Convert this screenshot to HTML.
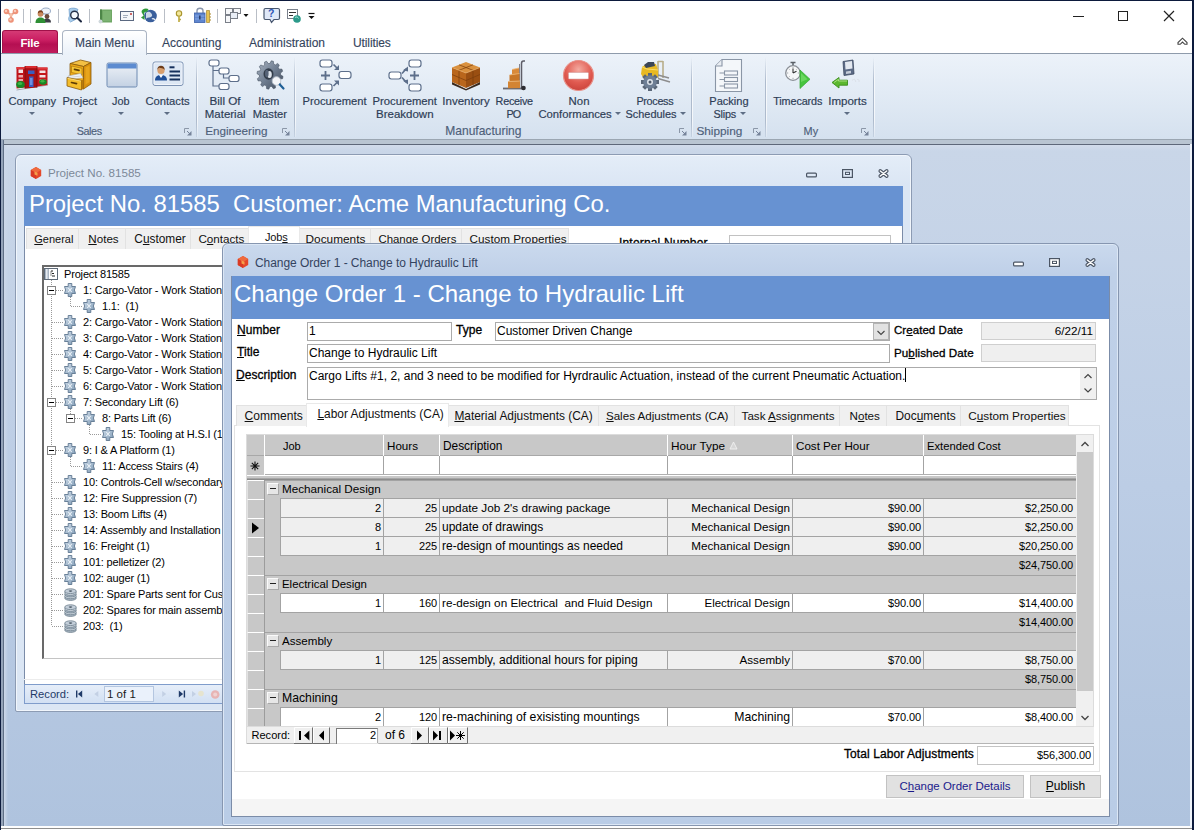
<!DOCTYPE html>
<html lang="en">
<head>
<meta charset="utf-8">
<title>Project No. 81585</title>
<style>
*{box-sizing:border-box;margin:0;padding:0}
html,body{width:1194px;height:830px;overflow:hidden;background:#fff}
body{position:relative;font-family:"Liberation Sans",sans-serif;font-size:12px;color:#000}
.a{position:absolute;white-space:nowrap}
u{text-decoration:underline;text-underline-offset:1px}
/* ---------- app frame ---------- */
#frameL{left:0;top:0;width:1px;height:830px;background:#0c1a3c}
#frameR{left:1192px;top:0;width:2px;height:830px;background:#0c1a3c}
#frameT{left:0;top:0;width:1194px;height:1px;background:#0c1a3c}
#qat{left:1px;top:1px;width:1191px;height:29px;background:#fff}
#tabrow{left:1px;top:30px;width:1191px;height:24px;background:#fff;border-bottom:1px solid #8e9bab}
#ribbon{left:1px;top:54px;width:1191px;height:85px;background:linear-gradient(#ecf2f9 0%,#e2ebf5 45%,#d5e1ef 100%)}
#ribline{left:1px;top:139px;width:1191px;height:1px;background:#9ba6b2}
#ribgap{left:1px;top:140px;width:1191px;height:4px;background:#bac5d2}
#mdiTop{left:1px;top:143.500px;width:1190px;height:1.500px;background:#5f687a}
#mdi{left:1px;top:145px;width:1191px;height:681px;background:linear-gradient(#d3dceb 0,#c9d6e8 6px,#bccde5 50%,#afc3de 100%)}
#mdiL{left:1px;top:140px;width:3px;height:686px;background:#94a3b9;border-right:1px solid #5f6f86}
#mdiL2{left:4px;top:145px;width:4px;height:681px;background:linear-gradient(90deg,#cdd8e9,rgba(205,216,233,0))}
#mdiR{left:1190px;top:144px;width:2px;height:684px;background:#eef3fa}
#status{left:1px;top:826px;width:1191px;height:4px;background:#fdfdfd;border-bottom:1px solid #fff}
#statusLine{left:1px;top:828px;width:1191px;height:1px;background:#8e8e8e}
.rl{color:#2e3d56;line-height:14px;-webkit-text-stroke:.18px #2e3d56}
.gl{color:#4e607a;line-height:14px;-webkit-text-stroke:.15px #4e607a}
.gsep2{width:1px;top:57px;height:80px;background:linear-gradient(rgba(255,255,255,0),rgba(255,255,255,.7) 30%,rgba(255,255,255,.7) 80%,rgba(255,255,255,.2))}
.gsep{width:1px;top:57px;height:80px;background:linear-gradient(rgba(160,175,195,0),#aebbcd 30%,#aebbcd 80%,rgba(160,175,195,.3))}
.rtab{font-size:12px;color:#34445c;top:36px;line-height:14px;-webkit-text-stroke:.12px #34445c}
.dd{width:0;height:0;border-left:3px solid transparent;border-right:3px solid transparent;border-top:3px solid #5e6e85}
/* ---------- child windows ---------- */
.win{border:1px solid #8c9bb3;border-radius:6px 6px 2px 2px;background:#dbe6f4;box-shadow:inset 0 0 0 1px #f1f6fc}
.hdr{background:#6792d2;color:#fff}
.tab{color:#111;top:0;line-height:16px;background:#f0f0f0;border:1px solid #e2e2e2;border-bottom:none;font-size:12px}
.tab.sel{background:#fff;border-color:#e9e9e9;z-index:2}

.fl{font-size:12px;line-height:15px;-webkit-text-stroke:.3px #000;letter-spacing:.05px}
.fb{font-size:12px;line-height:17px;padding:0 2px 0 1px;border:1px solid #ababab;background:#fff;overflow:hidden}
.fb.ro{background:#efefef;border-color:#cfcfcf;padding-right:3px}
.btn{font-size:12px;line-height:21px;text-align:center;background:#e1e1e1;border:1px solid #c2c2c2}

.gh{height:21px;line-height:22px}
.gt{line-height:16px}
.gc{line-height:18px;height:18px;padding:0 2px;overflow:hidden}
</style>
</head>
<body>
<div class="a" id="qat"></div>
<div class="a" id="tabrow"></div>
<div class="a" id="ribbon"></div>
<div class="a" id="ribline"></div>
<div class="a" id="ribgap"></div>
<div class="a" id="mdi"></div>
<div class="a" id="mdiTop"></div>
<div class="a" id="mdiL"></div>
<div class="a" id="status"></div>
<div class="a" id="frameT"></div>
<div class="a" id="frameL"></div>
<div class="a" id="frameR"></div>
<div class="a" id="mdiL2"></div>
<div class="a" id="mdiR"></div>
<div class="a" id="statusLine"></div>

<!--RIBBON--><!--RL-->
<div class="a rl" style="left:8.4px;top:94px;font-size:11.17px">Company</div>
<div class="a rl" style="left:62.4px;top:94px;font-size:11.12px">Project</div>
<div class="a rl" style="left:112.0px;top:94px;font-size:10.85px">Job</div>
<div class="a rl" style="left:145.4px;top:94px;font-size:11.23px">Contacts</div>
<div class="a rl" style="left:209.4px;top:94px;font-size:11.7px">Bill Of</div>
<div class="a rl" style="left:204.8px;top:107px;font-size:11.47px">Material</div>
<div class="a rl" style="left:258.3px;top:94px;font-size:10.85px">Item</div>
<div class="a rl" style="left:252.7px;top:107px;font-size:11.22px">Master</div>
<div class="a rl" style="left:302.6px;top:94px;font-size:11.2px">Procurement</div>
<div class="a rl" style="left:372.5px;top:94px;font-size:11.27px">Procurement</div>
<div class="a rl" style="left:376.0px;top:107px;font-size:11.51px">Breakdown</div>
<div class="a rl" style="left:442.3px;top:94px;font-size:11.52px">Inventory</div>
<div class="a rl" style="left:495.6px;top:94px;font-size:10.8px;letter-spacing:-0.26px">Receive</div>
<div class="a rl" style="left:506.5px;top:107px;font-size:10.8px;letter-spacing:-0.852px">PO</div>
<div class="a rl" style="left:568.6px;top:94px;font-size:11.39px">Non</div>
<div class="a rl" style="left:538.4px;top:107px;font-size:11.29px">Conformances</div>
<div class="a rl" style="left:636.4px;top:94px;font-size:10.8px;letter-spacing:-0.302px">Process</div>
<div class="a rl" style="left:625.5px;top:107px;font-size:10.94px">Schedules</div>
<div class="a rl" style="left:709.3px;top:94px;font-size:11.05px">Packing</div>
<div class="a rl" style="left:713.5px;top:107px;font-size:10.8px;letter-spacing:-0.182px">Slips</div>
<div class="a rl" style="left:773.2px;top:94px;font-size:10.8px;letter-spacing:-0.101px">Timecards</div>
<div class="a rl" style="left:828.2px;top:94px;font-size:11.55px">Imports</div>
<div class="a gl" style="left:76.7px;top:124px;font-size:10.8px;letter-spacing:-0.403px">Sales</div>
<div class="a gl" style="left:205.2px;top:124px;font-size:11.69px">Engineering</div>
<div class="a gl" style="left:445.3px;top:124px;font-size:12.02px">Manufacturing</div>
<div class="a gl" style="left:696.4px;top:124px;font-size:11.82px">Shipping</div>
<div class="a gl" style="left:803.6px;top:124px;font-size:10.88px">My</div>
<div class="a dd" style="left:28.5px;top:111.5px"></div>
<div class="a dd" style="left:76.5px;top:111.5px"></div>
<div class="a dd" style="left:118px;top:111.5px"></div>
<div class="a dd" style="left:164px;top:111.5px"></div>
<div class="a dd" style="left:614.5px;top:112px"></div>
<div class="a dd" style="left:680px;top:112px"></div>
<div class="a dd" style="left:740px;top:112px"></div>
<div class="a dd" style="left:844px;top:112px"></div>
<svg class="a" style="left:184px;top:127.500px" width="8" height="8" viewBox="0 0 8 8"><path d="M.5 5V.5H5" fill="none" stroke="#8b97a8"/><path d="M7.500 3v4.500H3z" fill="#76839a"/><path d="M3 3l3.500 3.500" stroke="#76839a"/></svg>
<svg class="a" style="left:281.5px;top:127.500px" width="8" height="8" viewBox="0 0 8 8"><path d="M.5 5V.5H5" fill="none" stroke="#8b97a8"/><path d="M7.500 3v4.500H3z" fill="#76839a"/><path d="M3 3l3.500 3.500" stroke="#76839a"/></svg>
<svg class="a" style="left:679px;top:127.500px" width="8" height="8" viewBox="0 0 8 8"><path d="M.5 5V.5H5" fill="none" stroke="#8b97a8"/><path d="M7.500 3v4.500H3z" fill="#76839a"/><path d="M3 3l3.500 3.500" stroke="#76839a"/></svg>
<svg class="a" style="left:753px;top:127.500px" width="8" height="8" viewBox="0 0 8 8"><path d="M.5 5V.5H5" fill="none" stroke="#8b97a8"/><path d="M7.500 3v4.500H3z" fill="#76839a"/><path d="M3 3l3.500 3.500" stroke="#76839a"/></svg>
<svg class="a" style="left:861px;top:127.500px" width="8" height="8" viewBox="0 0 8 8"><path d="M.5 5V.5H5" fill="none" stroke="#8b97a8"/><path d="M7.500 3v4.500H3z" fill="#76839a"/><path d="M3 3l3.500 3.500" stroke="#76839a"/></svg>
<!--/RL-->
<!-- ribbon tabs -->
<div class="a" style="left:2px;top:30px;width:56px;height:23px;border-radius:3px 3px 0 0;background:linear-gradient(#d53a75 0%,#cb1f63 40%,#b50f52 60%,#c01c5c 100%);border:1px solid #a01049;border-bottom:none"></div>
<div class="a" style="left:2px;top:36px;width:56px;text-align:center;font-size:11.5px;color:#fff;font-weight:bold;letter-spacing:-.2px;line-height:14px">File</div>
<div class="a" style="left:62px;top:30px;width:85px;height:25px;border:1px solid #aab4c3;border-bottom:none;border-radius:4px 4px 0 0;background:linear-gradient(#fff,#eaf1f9)"></div>
<div class="a rtab" style="left:75px">Main Menu</div>
<div class="a rtab" style="left:162px">Accounting</div>
<div class="a rtab" style="left:249px">Administration</div>
<div class="a rtab" style="left:353px;letter-spacing:-.1px">Utilities</div>
<!-- window buttons -->
<svg class="a" style="left:1060px;top:0" width="134" height="54" viewBox="0 0 134 54" fill="none" stroke="#222" stroke-width="1">
<path d="M13 16.500h11"/><rect x="58.5" y="11.5" width="9" height="9"/><path d="M104 11l10 10M114 11l-10 10" stroke-width="1.2"/>
<path d="M118 44.300v-1.800l4.500-4.300 4.500 4.300v1.800h-2.200l-2.300-2.300-2.300 2.300z" stroke="#444" stroke-width="1.100" fill="#fff"/>
</svg>
<!-- group separators -->
<div class="a gsep" style="left:196px"></div><div class="a gsep2" style="left:197px"></div><div class="a gsep" style="left:294px"></div><div class="a gsep2" style="left:295px"></div><div class="a gsep" style="left:691px"></div><div class="a gsep2" style="left:692px"></div><div class="a gsep" style="left:765px"></div><div class="a gsep2" style="left:766px"></div><div class="a gsep" style="left:873px"></div><div class="a gsep2" style="left:874px"></div>

<!-- Company -->
<svg class="a" style="left:15px;top:64px" width="34" height="27" viewBox="0 0 34 27">
<path d="M1 22.500l32-4v2.500L1.500 26z" fill="#f4f5f6"/><path d="M1.500 26l31.500-5" stroke="#8e969e" stroke-width=".8"/>
<path d="M1.500 3h8.500v20.500l-8.500 1z" fill="#c0151a"/><path d="M1.500 3h8.500v2h-8.500z" fill="#e0383c"/>
<path d="M22 3.500h10.500v17.500L22 22.500z" fill="#c4181c"/><path d="M22 3.500h10.500v2H22z" fill="#e0383c"/>
<path d="M10 2h12v21.500L10 24.500z" fill="#a80f14"/><path d="M10 2h12v2.200H10z" fill="#d92c30"/><path d="M10 2v22.500" stroke="#7c0a0e" stroke-width=".8"/><path d="M22 2v21.500" stroke="#7c0a0e" stroke-width=".8"/>
<g fill="#f3e4e5"><rect x="3.500" y="5.500" width="4.500" height="3.500"/><rect x="24.500" y="6.500" width="6" height="2.500"/><rect x="24.500" y="11" width="6" height="2.500"/></g>
<g fill="#e9a5a7"><rect x="3.500" y="11" width="4.500" height="2.500"/><rect x="3.500" y="15" width="4.500" height="2"/><rect x="24.500" y="15.500" width="6" height="2"/></g>
<g fill="#3a5cc0"><rect x="13" y="6.500" width="6.500" height="3.500"/><rect x="14" y="12.500" width="4.500" height="10.500"/></g><rect x="15" y="14" width="2.500" height="7" fill="#6f8fe0"/>
<ellipse cx="5.500" cy="20.500" rx="4.300" ry="3.600" fill="#178a27"/><ellipse cx="28" cy="18" rx="3.800" ry="2.800" fill="#178a27"/><ellipse cx="5" cy="19.500" rx="2.200" ry="1.500" fill="#3fb444"/><ellipse cx="27.500" cy="17.300" rx="2" ry="1.200" fill="#3fb444"/>
</svg>
<!-- Project -->
<svg class="a" style="left:65px;top:58px" width="28" height="33" viewBox="0 0 28 33" stroke-linejoin="round">
<path d="M5 5.500L15.500 2l10.500 2.500L18.500 8.500z" fill="#f3c044" stroke="#8a5a0a" stroke-width=".8"/>
<path d="M18.500 8.500L26 4.500V26l-7.500 5z" fill="#d8900d" stroke="#8a5a0a" stroke-width=".8"/><path d="M20.500 9.500l4-2v16.500l-4 2.800z" fill="#e8a51c"/>
<path d="M5 5.500l13.500 3V31L5 27z" fill="#eeaa18" stroke="#8a5a0a" stroke-width=".8"/>
<path d="M6.500 8l10.500 2.300v6.500L6.500 14.500z" fill="#f6c534" stroke="#a36a08" stroke-width=".6"/>
<path d="M9.500 11.300l4.500 1" stroke="#5e3c05" stroke-width="1.700" stroke-linecap="round"/>
<path d="M3 18l12.500-2.500 2.500 4.500-14 1z" fill="#f2f4f6" stroke="#9aa0a8" stroke-width=".5"/><path d="M4 19.500l12-1.500" stroke="#c5cad0" stroke-width=".7"/>
<path d="M2 19.500l14.500 3v9.500L2 28z" fill="#f4bd2a" stroke="#8a5a0a" stroke-width=".8"/><path d="M16.500 22.500l2-1.500v9.500l-2 1.500z" fill="#b97a0a"/>
<path d="M6.500 24.500l5 1.100" stroke="#5e3c05" stroke-width="1.700" stroke-linecap="round"/>
<path d="M2.500 20.300l13.500 2.800" stroke="#fbdf86" stroke-width=".8"/>
</svg>
<!-- Job -->
<svg class="a" style="left:106px;top:62px" width="32" height="26" viewBox="0 0 32 26">
<defs><linearGradient id="jb" x1="0" y1="0" x2="0" y2="1"><stop offset="0" stop-color="#eef2f7"/><stop offset="1" stop-color="#c3d1e3"/></linearGradient></defs>
<rect x="1" y="1" width="30" height="24" rx="1.500" fill="url(#jb)" stroke="#6f8bb2" stroke-width="1"/>
<path d="M1.500 2.500a1 1 0 0 1 1-1h27a1 1 0 0 1 1 1V6.500h-29z" fill="#5c8bd0"/>
</svg>
<!-- Contacts -->
<svg class="a" style="left:152px;top:61px" width="32" height="26" viewBox="0 0 32 26">
<rect x="1" y="1" width="30" height="23.500" rx="2" fill="#dde7f4" stroke="#7d93b4" stroke-width="1"/>
<rect x="2" y="2" width="28" height="21.500" rx="1.500" fill="none" stroke="#f5f8fc" stroke-width=".8"/>
<path d="M3 19.500c0-4 2.500-5.500 6-5.500s6 1.500 6 5.500z" fill="#1f4f98"/><path d="M7 14l2 3 2-3z" fill="#fff"/>
<circle cx="9" cy="9.500" r="3.600" fill="#d79e6d"/><path d="M5.300 9c0-3 1.600-4.300 3.700-4.300s3.700 1.300 3.700 4.300c-1.300-2-4-1.600-5.400-2.200-.7.400-1.500 1-2 2.200z" fill="#6b3a17"/>
<g fill="#16305c"><rect x="17.500" y="5.300" width="5" height="2"/><rect x="17.500" y="9.500" width="10.500" height="2"/><rect x="17.500" y="13.500" width="10.500" height="2"/><rect x="17.500" y="17.500" width="10.500" height="2"/></g>
</svg>

<!-- BOM -->
<svg class="a" style="left:208px;top:59px" width="33" height="33" viewBox="0 0 33 33" fill="#fff" stroke="#5d6f8b" stroke-width="1.200">
<path d="M5 7v20h6M5 11.500h6M15.500 15v4h6" fill="none"/>
<rect x="1" y="1" width="10" height="6" rx="2.200"/><rect x="11" y="9" width="10" height="6" rx="2.200"/><rect x="21" y="16.500" width="10" height="6" rx="2.200"/><rect x="11" y="24.500" width="10" height="6" rx="2.200"/>
</svg>
<!-- Item master gear -->
<svg class="a" style="left:256px;top:59px" width="30" height="33" viewBox="0 0 30 33">
<defs><linearGradient id="gg" x1="0" y1="0" x2="1" y2="1"><stop offset="0" stop-color="#a9b4c2"/><stop offset=".5" stop-color="#6f7d90"/><stop offset="1" stop-color="#3f4a5a"/></linearGradient></defs>
<path d="M24.67 16.00L27.01 17.34L26.62 19.68L24.00 20.04L23.24 21.80L24.65 24.23L23.24 26.04L20.80 24.94L19.34 26.05L19.44 28.91L17.38 29.72L15.78 27.44L14.00 27.60L12.77 30.14L10.62 29.72L10.28 26.87L8.66 26.05L6.43 27.57L4.76 26.04L5.78 23.39L4.76 21.80L2.12 21.91L1.38 19.68L3.48 17.93L3.33 16.00L0.99 14.66L1.38 12.32L4.00 11.96L4.76 10.20L3.35 7.77L4.76 5.96L7.20 7.06L8.66 5.95L8.56 3.09L10.62 2.28L12.22 4.56L14.00 4.40L15.23 1.86L17.38 2.28L17.72 5.13L19.34 5.95L21.57 4.43L23.24 5.96L22.22 8.61L23.24 10.20L25.88 10.09L26.62 12.32L24.52 14.07z" fill="url(#gg)" stroke="#4a5565" stroke-width=".6"/>
<ellipse cx="12.500" cy="15" rx="5" ry="5.800" fill="#333d4b"/><ellipse cx="13.500" cy="15.500" rx="2.300" ry="3.500" fill="#dfe5ec"/><ellipse cx="10.800" cy="14.500" rx="1.800" ry="3.800" fill="#566377"/>
<circle cx="20.500" cy="22" r="4.300" fill="#f3f5f8" stroke="#b9c2cd" stroke-width=".9"/><path d="M23.800 25.500l3.700 4" stroke="#1f5f96" stroke-width="2.200" stroke-linecap="round"/>
</svg>
<!-- Procurement -->
<svg class="a" style="left:319px;top:59px" width="34" height="34" viewBox="0 0 34 34" fill="#fff" stroke="#5d6f8b" stroke-width="1.200">
<rect x="1" y="1" width="12" height="7" rx="2.400"/><rect x="1" y="25" width="12" height="7" rx="2.400"/><rect x="20" y="12.500" width="12" height="7" rx="2.400"/>
<path d="M14.500 5.500l4 4M14.500 27l4-4" fill="none" stroke-width="1.700"/><path d="M20 6v5h-5zM20 26.500v-5h-5z" fill="#5d6f8b" stroke="none"/>
<path d="M2 16.500h9M6.500 12v9" stroke-width="1.800" fill="none"/>
</svg>
<!-- Procurement breakdown -->
<svg class="a" style="left:388px;top:59px" width="34" height="34" viewBox="0 0 34 34" fill="#fff" stroke="#5d6f8b" stroke-width="1.200">
<rect x="21" y="1" width="12" height="7" rx="2.400"/><rect x="21" y="25" width="12" height="7" rx="2.400"/><rect x="1" y="13" width="12" height="7" rx="2.400"/>
<path d="M14 14.500l4-4.500M14 18.500l4 4.500" fill="none" stroke-width="1.700"/><path d="M20 7.500v5l-5-1.200zM20 25.500v-5l-5 1.200z" fill="#5d6f8b" stroke="none"/>
<path d="M22 16.500h9M26.500 12v9" stroke-width="1.800" fill="none"/>
</svg>
<!-- Inventory -->
<svg class="a" style="left:450px;top:61px" width="32" height="30" viewBox="0 0 32 30">
<path d="M2 21l14 7 14-7v2.500l-14 6-14-6z" fill="#3a2a1e"/>
<path d="M2 6.500L16 1l14 5.500L16 12z" fill="#d9913f"/><path d="M2 6.500l14 5.500v15L2 21z" fill="#b9661c"/><path d="M30 6.500L16 12v15l14-6z" fill="#9a4f12"/>
<path d="M9 3.800l14 5.500M23 3.800L9 9.300M2 13.500l14 6 14-6M9 9.300v15M23 9.300v15" stroke="#7a3c0c" stroke-width=".7" fill="none"/>
<path d="M2 6.500L16 12l14-5.500" stroke="#e9ad66" stroke-width=".7" fill="none"/>
</svg>
<!-- Receive PO -->
<svg class="a" style="left:500px;top:58px" width="30" height="34" viewBox="0 0 30 34">
<path d="M21.500 30V5.500c0-2 .5-2.500 2-2.500h1.500" fill="none" stroke="#5e5e68" stroke-width="1.500"/><path d="M19.500 30V6" stroke="#85858f" stroke-width="1"/>
<path d="M3 30.500h20" stroke="#6a6a72" stroke-width="1.800"/>
<path d="M12 11.500l7-1.500v6l-7 1z" fill="#d98a3a"/><path d="M9.500 17l10-1.500v7.500l-10 .5z" fill="#c87728"/><path d="M8 23.500l12-.5v7l-12 .3z" fill="#d38433"/>
<path d="M12 11.500l7-1.500M9.500 17l10-1.500M8 23.500l12-.5" stroke="#efb776" stroke-width=".8"/>
<circle cx="23.500" cy="30" r="2.300" fill="#2d2d33"/>
</svg>
<!-- Non conformances -->
<svg class="a" style="left:562px;top:59px" width="33" height="33" viewBox="0 0 33 33">
<defs><radialGradient id="nc" cx=".5" cy=".3" r=".8"><stop offset="0" stop-color="#f4aaa0"/><stop offset=".55" stop-color="#e05a50"/><stop offset="1" stop-color="#c43c35"/></radialGradient></defs>
<circle cx="16.500" cy="16.500" r="15" fill="url(#nc)" stroke="#e89088" stroke-width="1.200"/>
<rect x="6.500" y="13.500" width="20" height="6.500" rx=".8" fill="#fff" stroke="#c99" stroke-width=".5"/>
</svg>
<!-- Process schedules -->
<svg class="a" style="left:638px;top:59px" width="34" height="33" viewBox="0 0 34 33">
<path d="M20 2v17M25 2v17M20 2.500h5" stroke="#b8ae8a" stroke-width="1.600" fill="none"/>
<path d="M20 19.500l12 3.500M20 16l11 3" stroke="#8d8d8d" stroke-width="1.400"/>
<path d="M4 8l6-4 8 1 2 6v7l-14 2-3-5z" fill="#e8b923"/><path d="M6 6l4-3h6l1 4-9 2z" fill="#3b4656"/><path d="M4 8l5 2 11 1" stroke="#f8dc6a" stroke-width="1" fill="none"/>
<g transform="translate(12 23)"><g fill="#5a6778"><rect x="-2" y="-9" width="4" height="18"/><rect x="-2" y="-9" width="4" height="18" transform="rotate(45)"/><rect x="-2" y="-9" width="4" height="18" transform="rotate(90)"/><rect x="-2" y="-9" width="4" height="18" transform="rotate(135)"/></g><circle r="6.800" fill="#6e7f95"/><circle r="3" fill="#dfe5ec"/><circle r="1.500" fill="#4b5868"/></g>
</svg>
<!-- Packing slips -->
<svg class="a" style="left:714px;top:58px" width="29" height="35" viewBox="0 0 29 35" fill="#f4f7fa" stroke="#8a96a6" stroke-width="1.100">
<path d="M8 1.500h19.500v32h-26V8z"/><path d="M8 1.500V8H1.500" fill="#e9edf2"/>
<rect x="10.500" y="13" width="13" height="4"/><rect x="10.500" y="19.500" width="13" height="4"/><rect x="10.500" y="26" width="13" height="4"/><path d="M5.500 15h5M5.500 21.500h5M5.500 28h5" fill="none"/>
</svg>
<!-- Timecards -->
<svg class="a" style="left:782px;top:59px" width="32" height="33" viewBox="0 0 32 33">
<path d="M8.500 3.500h5M11 3.500v3" stroke="#5a5f66" stroke-width="1.500"/><circle cx="11" cy="14" r="7.300" fill="#f6f7f8" stroke="#8a8f96" stroke-width="1.300"/>
<g stroke="#8e949b" stroke-width=".8"><path d="M11 8v1.200M11 18.800V20M5 14h1.200M15.800 14H17M6.800 9.800l.8.800M14.400 10.600l.8-.8M6.800 18.200l.8-.8"/></g>
<path d="M11 14V9.500M11 14l3.500-1.800" stroke="#333" stroke-width="1.100" fill="none"/>
<path d="M18 11l10 9.300L18 29.500z" fill="#46c53e" stroke="#35a832" stroke-width=".7"/><path d="M19 14l6.500 6.200L19 23z" fill="#86e578" opacity=".55"/>
</svg>
<!-- Imports -->
<svg class="a" style="left:829px;top:59px" width="34" height="33" viewBox="0 0 34 33">
<path d="M14 2.500l10-1.500 1 14-10 1.500z" fill="#5b6a85" stroke="#3e4a61" stroke-width=".8"/><path d="M16 3l7-1 .5 7.500-7 1z" fill="#e4e9f0"/><path d="M17 12.500l5-.7v2.500l-5 .7z" fill="#c5ccd8"/>
<path d="M3 23.500l7-5v2.700h8.500v5H10v2.800z" fill="#5cb82f" stroke="#3b8d1c" stroke-width=".9"/><path d="M5 23.500l4.500-3.200v1.700h8.500" stroke="#a8e07f" stroke-width="1" fill="none"/>
<path d="M23 21.500c2-2 4-1 3.500 1.500M28 20.500c1.500-.5 2.500.5 2 2.500" stroke="#dce1e9" stroke-width="1" fill="none"/>
</svg>

<svg class="a" style="left:0;top:0" width="330" height="30" viewBox="0 0 330 30">
<!-- app icon -->
<g stroke="#e39a84" stroke-width="1.800" fill="none"><path d="M7 12l4 3 4-3M11 15v5"/></g>
<g fill="#ee9279"><circle cx="6.500" cy="11.500" r="2.800"/><circle cx="15.500" cy="11.500" r="2.800"/><circle cx="11" cy="20" r="2.800"/><circle cx="11" cy="15" r="1.800" fill="#f6c0a8"/></g>
<g fill="#f8cdbd"><circle cx="6" cy="11" r="1.200"/><circle cx="15" cy="11" r="1.200"/><circle cx="10.500" cy="19.500" r="1.200"/></g>
<!-- separators -->
<g stroke="#b9bec6" stroke-width="1"><path d="M23.500 9v14M30.500 9v14M58.500 9v14M89.500 9v14M164.500 9v14M217.500 9v14M256.500 9v14"/></g>
<!-- people -->
<ellipse cx="46" cy="11" rx="4.500" ry="3" fill="#eef2f7" stroke="#8fa3c0" stroke-width=".9"/><path d="M43 13.500l-1 2 2.500-1.500z" fill="#eef2f7" stroke="#8fa3c0" stroke-width=".6"/>
<circle cx="47" cy="16.500" r="2.400" fill="#6a4a3a"/><path d="M43 22.500c0-3 1.800-4 4-4s4 1 4 4z" fill="#3c3c46"/>
<circle cx="40.500" cy="14" r="2.800" fill="#c98a5e"/><path d="M37.800 13.500c0-2.500 1.200-3.300 2.700-3.300s2.700.8 2.700 3.300c-1-1.300-3.500-1.800-5.400 0z" fill="#7a3c18"/><path d="M35.500 23c0-4 2.300-5.500 5-5.500s5 1.500 5 5.500z" fill="#2f8f35"/>
<!-- find -->
<path d="M69 9c3-1.500 7-1 9 .5l-1.500 3c2 2 1 6-1 7l-5 2.500c-2-1-2.500-4-1-6z" fill="#a9cdec" stroke="#6f9cc8" stroke-width=".7"/>
<circle cx="74.500" cy="15" r="3.800" fill="#f4f8fc" stroke="#26324a" stroke-width="1.400"/><path d="M77.300 17.800l3.700 3.700" stroke="#1c2740" stroke-width="2" stroke-linecap="round"/>
<!-- book -->
<path d="M100 9.500h12v13h-12z" fill="#6fa765"/><path d="M100 9.500h2v13h-2z" fill="#4d8648"/><path d="M103 11h8v10h-8z" fill="#86ba7b" opacity=".6"/><circle cx="100.500" cy="21.500" r="2" fill="#cfd8dc"/>
<!-- envelope -->
<rect x="120.500" y="11.500" width="13" height="9" fill="#f4f6f9" stroke="#5a6880" stroke-width="1"/><path d="M123 15.500h5M123 17.500h4" stroke="#8d99ab" stroke-width=".8"/><rect x="130" y="13" width="2" height="2" fill="#c66"/>
<!-- globe -->
<circle cx="150.500" cy="16" r="6.300" fill="#3a5f9c"/><path d="M146 13c2-2 4-1 5 0s2 3 0 4-4 0-5 2" fill="#e8eef5" opacity=".85"/><path d="M152 19c1-1 3 0 3 1.500" stroke="#e8eef5" stroke-width="1.300" fill="none"/>
<path d="M141.500 12c0-3 4-4.500 7-3l-1.500 3c-2-.5-3 .5-3 2.500v2z" fill="#2f9a3a"/><path d="M141 17.500l3.500-2.500v5z" fill="#2f9a3a"/>
<!-- key -->
<circle cx="179" cy="13.500" r="2.700" fill="#f3e79a" stroke="#a8942c" stroke-width="1.100"/><path d="M179 16v6M179 19.500h1.800" stroke="#a8942c" stroke-width="1.600"/><path d="M179 16v6" stroke="#f0e17c" stroke-width=".6"/>
<!-- lock+key -->
<path d="M197 13v-2.200c0-3.500 6-3.500 6 0V13" fill="none" stroke="#8b97ad" stroke-width="1.400"/><rect x="194.500" y="13" width="10.500" height="9.500" fill="#5f86cf" stroke="#3b5fa8" stroke-width=".8"/><path d="M195 16h9.500M195 19h9.500" stroke="#8fb0e8" stroke-width=".8"/><rect x="199.200" y="15.500" width="1.300" height="4" fill="#1d2f58"/>
<path d="M206.500 10.500h3v12h-3z" fill="#e6c352" stroke="#a8862a" stroke-width=".7"/><path d="M209.500 14h1.500M209.500 17h1.500M209.500 20h1.500" stroke="#a8862a" stroke-width="1.200"/>
<!-- windows -->
<g fill="#f6f7f9" stroke="#7a7f88" stroke-width="1"><rect x="225.500" y="8.500" width="7" height="6"/><rect x="233.500" y="8.500" width="7" height="5"/><rect x="225.500" y="15.500" width="5" height="7"/><rect x="230.500" y="12.500" width="7" height="6" fill="#e9eef6"/></g>
<path d="M243.500 14h5l-2.500 3z" fill="#111"/>
<!-- help -->
<path d="M265.500 8.500h12.500a1.500 1.500 0 0 1 1.500 1.500v8a1.500 1.500 0 0 1-1.500 1.500h-4l-2.500 3-1.500-3H265.500A1.500 1.500 0 0 1 264 18v-8a1.500 1.500 0 0 1 1.500-1.500z" fill="#dfe8f8" stroke="#47566e" stroke-width="1.200"/>
<!-- list+globe -->
<rect x="287.500" y="9.500" width="10" height="9" fill="#fff" stroke="#6d7480" stroke-width=".9"/><path d="M289 12.500h7M289 15.500h4" stroke="#333" stroke-width="1"/><circle cx="297" cy="19" r="3.800" fill="#2c9a8a"/><path d="M295 17.500c1.500-1 3-.5 3.500 1" stroke="#9fe3d4" stroke-width="1" fill="none"/>
<!-- customize -->
<path d="M308.500 13.500h6" stroke="#111" stroke-width="1.200"/><path d="M308.500 16h6l-3 3z" fill="#111"/>
</svg>
<div class="a" style="left:268px;top:7px;font-size:10.500px;font-weight:bold;color:#2f55b5;line-height:13px">?</div>


<!--PROJECTWIN-->
<div class="a win" id="pw" style="left:15px;top:154px;width:897px;height:558px;background:linear-gradient(#e4edf8,#dbe6f4 30px)"></div>
<svg class="a" style="left:29px;top:166px" width="14" height="14" viewBox="0 0 14 14"><path d="M7 1l5.2 3v6L7 13 1.8 10V4z" fill="#e4472a"/><path d="M7 1l5.2 3L7 7 1.8 4z" fill="#ef6a3d"/><path d="M7 7v6L1.8 10V4z" fill="#d93a25"/><path d="M5.5 5.5l3 1.2v3l-3-1.2z" fill="#f6a04a"/></svg>
<div class="a" style="left:48px;top:166px;font-size:11.6px;color:#7c8898;line-height:14px">Project No. 81585</div>
<svg class="a" style="left:800px;top:164px" width="96" height="18" viewBox="0 0 96 18" fill="none" stroke="#4b5564" stroke-width="1.2">
<rect x="6.6" y="9.1" width="9.8" height="3.8" rx="1"/><rect x="42.6" y="5.6" width="9.8" height="7.8"/><rect x="45.5" y="8.3" width="4" height="2.2" stroke-width="1"/>
<path d="M80.300 7l6.400 5M86.700 7l-6.400 5" stroke-width="3.700" stroke-linecap="round"/><path d="M80.300 7l6.400 5M86.700 7l-6.400 5" stroke="#fff" stroke-width="1.500" stroke-linecap="round"/></svg>
<div class="a" style="left:24px;top:186px;width:879px;height:518px;background:#fff;border-left:1px solid #7b8ca8;border-right:1px solid #7b8ca8"></div>
<div class="a hdr" style="left:24px;top:186px;width:879px;height:40px"></div>
<div class="a" style="left:29px;top:190px;font-size:23.9px;line-height:28px;color:#fff;letter-spacing:-.03px">Project No. 81585&nbsp; Customer: Acme Manufacturing Co.</div>
<!-- tabs -->
<div class="a" style="left:26px;top:228px;width:560px;height:21px;z-index:0">
<div class="a tab" style="left:0px;width:53px;height:21px"><span class="a" style="left:7.3px;top:1.5px;font-size:11.0px;letter-spacing:-0.019px"><u>G</u>eneral</span></div>
<div class="a tab" style="left:52px;width:48px;height:21px"><span class="a" style="left:9.3px;top:1.5px;font-size:11.64px"><u>N</u>otes</span></div>
<div class="a tab" style="left:99px;width:66px;height:21px"><span class="a" style="left:8.3px;top:1.5px;font-size:11.88px">C<u>u</u>stomer</span></div>
<div class="a tab" style="left:164px;width:59px;height:21px"><span class="a" style="left:7.4px;top:1.5px;font-size:11.66px">C<u>o</u>ntacts</span></div>
<div class="a tab sel" style="left:222px;width:52px;top:-2px;height:24px"><span class="a" style="left:16.0px;top:1.5px;font-size:11.0px;letter-spacing:-0.159px">Job<u>s</u></span></div>
<div class="a tab" style="left:273px;width:72px;height:21px"><span class="a" style="left:5.6px;top:1.5px;font-size:11.82px">Documents</span></div>
<div class="a tab" style="left:344px;width:92px;height:21px"><span class="a" style="left:7.4px;top:1.5px;font-size:11.41px">Change Orders</span></div>
<div class="a tab" style="left:435px;width:108px;height:21px"><span class="a" style="left:7.6px;top:1.5px;font-size:11.71px">Custom Properties</span></div>
</div>
<div class="a fl" style="left:619px;top:236px;letter-spacing:.18px">Internal Number</div>
<div class="a" style="left:729px;top:235px;width:162px;height:20px;border:1px solid #c2c2c2;background:#fff"></div>
<!-- tree box -->
<div class="a" style="left:42px;top:265px;width:400px;height:394px;background:#fff;border-top:2px solid #696969;border-left:2px solid #696969;border-bottom:1px solid #c4c4c4"></div>
<!--TREE--><svg width="0" height="0" style="position:absolute"><defs>
<linearGradient id="jg" x1="0" y1="0" x2="1" y2="1"><stop offset="0" stop-color="#d3e0ec"/><stop offset="1" stop-color="#7d99b4"/></linearGradient>
<symbol id="job" viewBox="0 0 12 14"><path d="M4.200 .5h3.600v3h3.700l-1.100 3.500 1.100 3.500H7.800v3H4.200v-3H.5l1.100-3.500L.5 3.500h3.700z" fill="url(#jg)" stroke="#5d7690" stroke-width=".9"/><path d="M4.300 5l3.400 4M7.700 5L4.300 9" stroke="#eef3f8" stroke-width="1.100"/></symbol>
<symbol id="stk" viewBox="0 0 13 13"><g stroke="#6c7d8c" stroke-width=".8"><ellipse cx="6.500" cy="10" rx="5.800" ry="2.400" fill="#a9b7c4"/><ellipse cx="6.500" cy="8.300" rx="5.800" ry="2.400" fill="#d5dee6"/><ellipse cx="6.500" cy="6.600" rx="5.800" ry="2.400" fill="#a9b7c4"/><ellipse cx="6.500" cy="4.900" rx="5.800" ry="2.400" fill="#d5dee6"/><ellipse cx="6.500" cy="3.200" rx="5.800" ry="2.400" fill="#c3ced9"/></g><ellipse cx="6.500" cy="3.100" rx="1.800" ry=".8" fill="#55636f"/></symbol>
<symbol id="root" viewBox="0 0 14 12"><rect x=".5" y=".5" width="13" height="11" fill="#fff" stroke="#5e6a78"/><rect x="1" y="1" width="4" height="10" fill="#aab6c4"/><rect x="2" y="1" width="1.500" height="10" fill="#e6ebf1"/><path d="M7 3h2M8 5.500h2M8 8h3" stroke="#222" stroke-width="1"/><path d="M7 3v5" stroke="#555" stroke-width=".7"/></symbol>
</defs></svg>
<div class="a" style="left:44px;top:267px;width:398px;height:390px;overflow:hidden;font-size:11px;letter-spacing:-.17px">
<div class="a" style="left:7px;top:13px;width:1px;height:346px;background-image:linear-gradient(#9a9a9a 50%,transparent 50%);background-size:1px 2px"></div>
<div class="a" style="left:26px;top:30px;width:1px;height:9px;background-image:linear-gradient(#9a9a9a 50%,transparent 50%);background-size:1px 2px"></div>
<div class="a" style="left:26px;top:142px;width:1px;height:5px;background-image:linear-gradient(#9a9a9a 50%,transparent 50%);background-size:1px 2px"></div>
<div class="a" style="left:45px;top:158px;width:1px;height:9px;background-image:linear-gradient(#9a9a9a 50%,transparent 50%);background-size:1px 2px"></div>
<div class="a" style="left:26px;top:190px;width:1px;height:9px;background-image:linear-gradient(#9a9a9a 50%,transparent 50%);background-size:1px 2px"></div>
<svg class="a" style="left:0px;top:1px" width="14" height="12"><use href="#root"/></svg>
<div class="a" style="left:20px;top:0px;line-height:14px">Project 81585</div>
<div class="a" style="left:8px;top:23px;width:12px;height:1px;background-image:linear-gradient(90deg,#9a9a9a 50%,transparent 50%);background-size:2px 1px"></div>
<div class="a" style="left:3px;top:19px;width:9px;height:9px;background:#fff;border:1px solid #848484"></div><div class="a" style="left:5px;top:23px;width:5px;height:1px;background:#000"></div>
<svg class="a" style="left:20px;top:16px" width="12" height="14"><use href="#job"/></svg>
<div class="a" style="left:39px;top:16px;line-height:14px">1: Cargo-Vator - Work Station</div>
<div class="a" style="left:27px;top:39px;width:12px;height:1px;background-image:linear-gradient(90deg,#9a9a9a 50%,transparent 50%);background-size:2px 1px"></div>
<svg class="a" style="left:39px;top:32px" width="12" height="14"><use href="#job"/></svg>
<div class="a" style="left:58px;top:32px;line-height:14px">1.1:&nbsp; (1)</div>
<div class="a" style="left:8px;top:55px;width:12px;height:1px;background-image:linear-gradient(90deg,#9a9a9a 50%,transparent 50%);background-size:2px 1px"></div>
<svg class="a" style="left:20px;top:48px" width="12" height="14"><use href="#job"/></svg>
<div class="a" style="left:39px;top:48px;line-height:14px">2: Cargo-Vator - Work Station</div>
<div class="a" style="left:8px;top:71px;width:12px;height:1px;background-image:linear-gradient(90deg,#9a9a9a 50%,transparent 50%);background-size:2px 1px"></div>
<svg class="a" style="left:20px;top:64px" width="12" height="14"><use href="#job"/></svg>
<div class="a" style="left:39px;top:64px;line-height:14px">3: Cargo-Vator - Work Station</div>
<div class="a" style="left:8px;top:87px;width:12px;height:1px;background-image:linear-gradient(90deg,#9a9a9a 50%,transparent 50%);background-size:2px 1px"></div>
<svg class="a" style="left:20px;top:80px" width="12" height="14"><use href="#job"/></svg>
<div class="a" style="left:39px;top:80px;line-height:14px">4: Cargo-Vator - Work Station</div>
<div class="a" style="left:8px;top:103px;width:12px;height:1px;background-image:linear-gradient(90deg,#9a9a9a 50%,transparent 50%);background-size:2px 1px"></div>
<svg class="a" style="left:20px;top:96px" width="12" height="14"><use href="#job"/></svg>
<div class="a" style="left:39px;top:96px;line-height:14px">5: Cargo-Vator - Work Station</div>
<div class="a" style="left:8px;top:119px;width:12px;height:1px;background-image:linear-gradient(90deg,#9a9a9a 50%,transparent 50%);background-size:2px 1px"></div>
<svg class="a" style="left:20px;top:112px" width="12" height="14"><use href="#job"/></svg>
<div class="a" style="left:39px;top:112px;line-height:14px">6: Cargo-Vator - Work Station</div>
<div class="a" style="left:8px;top:135px;width:12px;height:1px;background-image:linear-gradient(90deg,#9a9a9a 50%,transparent 50%);background-size:2px 1px"></div>
<div class="a" style="left:3px;top:131px;width:9px;height:9px;background:#fff;border:1px solid #848484"></div><div class="a" style="left:5px;top:135px;width:5px;height:1px;background:#000"></div>
<svg class="a" style="left:20px;top:128px" width="12" height="14"><use href="#job"/></svg>
<div class="a" style="left:39px;top:128px;line-height:14px">7: Secondary Lift (6)</div>
<div class="a" style="left:27px;top:151px;width:12px;height:1px;background-image:linear-gradient(90deg,#9a9a9a 50%,transparent 50%);background-size:2px 1px"></div>
<div class="a" style="left:22px;top:147px;width:9px;height:9px;background:#fff;border:1px solid #848484"></div><div class="a" style="left:24px;top:151px;width:5px;height:1px;background:#000"></div>
<svg class="a" style="left:39px;top:144px" width="12" height="14"><use href="#job"/></svg>
<div class="a" style="left:58px;top:144px;line-height:14px">8: Parts Lift (6)</div>
<div class="a" style="left:46px;top:167px;width:12px;height:1px;background-image:linear-gradient(90deg,#9a9a9a 50%,transparent 50%);background-size:2px 1px"></div>
<svg class="a" style="left:58px;top:160px" width="12" height="14"><use href="#job"/></svg>
<div class="a" style="left:77px;top:160px;line-height:14px">15: Tooling at H.S.I (1)</div>
<div class="a" style="left:8px;top:183px;width:12px;height:1px;background-image:linear-gradient(90deg,#9a9a9a 50%,transparent 50%);background-size:2px 1px"></div>
<div class="a" style="left:3px;top:179px;width:9px;height:9px;background:#fff;border:1px solid #848484"></div><div class="a" style="left:5px;top:183px;width:5px;height:1px;background:#000"></div>
<svg class="a" style="left:20px;top:176px" width="12" height="14"><use href="#job"/></svg>
<div class="a" style="left:39px;top:176px;line-height:14px">9: I &amp; A Platform (1)</div>
<div class="a" style="left:27px;top:199px;width:12px;height:1px;background-image:linear-gradient(90deg,#9a9a9a 50%,transparent 50%);background-size:2px 1px"></div>
<svg class="a" style="left:39px;top:192px" width="12" height="14"><use href="#job"/></svg>
<div class="a" style="left:58px;top:192px;line-height:14px">11: Access Stairs (4)</div>
<div class="a" style="left:8px;top:215px;width:12px;height:1px;background-image:linear-gradient(90deg,#9a9a9a 50%,transparent 50%);background-size:2px 1px"></div>
<svg class="a" style="left:20px;top:208px" width="12" height="14"><use href="#job"/></svg>
<div class="a" style="left:39px;top:208px;line-height:14px">10: Controls-Cell w/secondary lift</div>
<div class="a" style="left:8px;top:231px;width:12px;height:1px;background-image:linear-gradient(90deg,#9a9a9a 50%,transparent 50%);background-size:2px 1px"></div>
<svg class="a" style="left:20px;top:224px" width="12" height="14"><use href="#job"/></svg>
<div class="a" style="left:39px;top:224px;line-height:14px">12: Fire Suppression (7)</div>
<div class="a" style="left:8px;top:247px;width:12px;height:1px;background-image:linear-gradient(90deg,#9a9a9a 50%,transparent 50%);background-size:2px 1px"></div>
<svg class="a" style="left:20px;top:240px" width="12" height="14"><use href="#job"/></svg>
<div class="a" style="left:39px;top:240px;line-height:14px">13: Boom Lifts (4)</div>
<div class="a" style="left:8px;top:263px;width:12px;height:1px;background-image:linear-gradient(90deg,#9a9a9a 50%,transparent 50%);background-size:2px 1px"></div>
<svg class="a" style="left:20px;top:256px" width="12" height="14"><use href="#job"/></svg>
<div class="a" style="left:39px;top:256px;line-height:14px">14: Assembly and Installation (2)</div>
<div class="a" style="left:8px;top:279px;width:12px;height:1px;background-image:linear-gradient(90deg,#9a9a9a 50%,transparent 50%);background-size:2px 1px"></div>
<svg class="a" style="left:20px;top:272px" width="12" height="14"><use href="#job"/></svg>
<div class="a" style="left:39px;top:272px;line-height:14px">16: Freight (1)</div>
<div class="a" style="left:8px;top:295px;width:12px;height:1px;background-image:linear-gradient(90deg,#9a9a9a 50%,transparent 50%);background-size:2px 1px"></div>
<svg class="a" style="left:20px;top:288px" width="12" height="14"><use href="#job"/></svg>
<div class="a" style="left:39px;top:288px;line-height:14px">101: pelletizer (2)</div>
<div class="a" style="left:8px;top:311px;width:12px;height:1px;background-image:linear-gradient(90deg,#9a9a9a 50%,transparent 50%);background-size:2px 1px"></div>
<svg class="a" style="left:20px;top:304px" width="12" height="14"><use href="#job"/></svg>
<div class="a" style="left:39px;top:304px;line-height:14px">102: auger (1)</div>
<div class="a" style="left:8px;top:327px;width:12px;height:1px;background-image:linear-gradient(90deg,#9a9a9a 50%,transparent 50%);background-size:2px 1px"></div>
<svg class="a" style="left:20px;top:321px" width="13" height="13"><use href="#stk"/></svg>
<div class="a" style="left:39px;top:320px;line-height:14px">201: Spare Parts sent for Customer</div>
<div class="a" style="left:8px;top:343px;width:12px;height:1px;background-image:linear-gradient(90deg,#9a9a9a 50%,transparent 50%);background-size:2px 1px"></div>
<svg class="a" style="left:20px;top:337px" width="13" height="13"><use href="#stk"/></svg>
<div class="a" style="left:39px;top:336px;line-height:14px">202: Spares for main assembly</div>
<div class="a" style="left:8px;top:359px;width:12px;height:1px;background-image:linear-gradient(90deg,#9a9a9a 50%,transparent 50%);background-size:2px 1px"></div>
<svg class="a" style="left:20px;top:353px" width="13" height="13"><use href="#stk"/></svg>
<div class="a" style="left:39px;top:352px;line-height:14px">203:&nbsp; (1)</div>
</div>
<!--/TREE-->
<div class="a" style="left:24px;top:679px;width:879px;height:1px;background:#ececec"></div>
<!-- record nav -->
<div class="a" style="left:24px;top:684px;width:879px;height:20px;background:linear-gradient(#e6eef9,#d2e0f3);border:1px solid #7f9ccb;border-right:none"></div>
<div class="a" style="left:30px;top:687px;font-size:11.200px;color:#1f3a68;line-height:14px">Record:</div>
<svg class="a" style="left:72px;top:686px" width="150" height="16" viewBox="0 0 150 16">
<rect x="4" y="4.500" width="1.400" height="7" fill="#1f3a68"/><path d="M10.200 4.500v7l-4.300-3.500z" fill="#1f3a68"/>
<path d="M26.300 5v6l-4-3z" fill="#c3d0e4"/>
<rect x="32.500" y="0.500" width="49" height="15" fill="#eaf1fb" stroke="#b4c6e0"/>
<path d="M90.200 5v6l4-3z" fill="#c3d0e4"/>
<path d="M106.800 4.500v7l4.300-3.500z" fill="#1f3a68"/><rect x="111.700" y="4.500" width="1.400" height="7" fill="#1f3a68"/>
<path d="M120 5v6l4-3z" fill="#c3d0e4"/><circle cx="129" cy="7.500" r="2.800" fill="#e6e4cf"/>
<circle cx="143.200" cy="8.500" r="4.300" fill="#e7b4b4"/><circle cx="143.200" cy="8.500" r="2" fill="#efd2d2"/>
</svg>
<div class="a" style="left:107px;top:687px;font-size:11.500px;color:#1a1a1a;line-height:14px">1 of 1</div>


<!--COWIN-->
<div class="a win" id="cw" style="left:222px;top:243px;width:897px;height:583px;background:linear-gradient(#cad9ed,#bfd0e8 30px,#b9cce6);border-color:#8696b0;box-shadow:inset 0 0 0 1px #dce7f5"></div>
<svg class="a" style="left:236px;top:255px" width="14" height="14" viewBox="0 0 14 14"><path d="M7 1l5.200 3v6L7 13 1.800 10V4z" fill="#e4472a"/><path d="M7 1l5.200 3L7 7 1.800 4z" fill="#ef6a3d"/><path d="M7 7v6L1.800 10V4z" fill="#d93a25"/><path d="M5.500 5.500l3 1.200v3l-3-1.200z" fill="#f6a04a"/></svg>
<div class="a" style="left:255px;top:256px;font-size:12px;color:#34435f;line-height:15px;letter-spacing:-.05px">Change Order 1 - Change to Hydraulic Lift</div>
<svg class="a" style="left:1007px;top:253px" width="96" height="18" viewBox="0 0 96 18" fill="none" stroke="#4b5564" stroke-width="1.200">
<rect x="6.600" y="9.100" width="9.800" height="3.800" rx="1" fill="#fff"/><rect x="42.600" y="5.600" width="9.800" height="7.800" fill="#fff"/><rect x="45.500" y="8.300" width="4" height="2.200" stroke-width="1"/>
<path d="M80.300 7l6.400 5M86.700 7l-6.400 5" stroke-width="3.700" stroke-linecap="round"/><path d="M80.300 7l6.400 5M86.700 7l-6.400 5" stroke="#fff" stroke-width="1.500" stroke-linecap="round"/></svg>
<div class="a" style="left:231px;top:276px;width:879px;height:541px;background:#fff;border-left:1px solid #7b8ca8;border-right:1px solid #7b8ca8;border-bottom:1px solid #7b8ca8"></div>
<div class="a" style="left:232px;top:799px;width:877px;height:17px;background:#f5f5f5"></div>
<div class="a hdr" style="left:232px;top:276px;width:877px;height:43px"></div>
<div class="a" style="left:234px;top:280px;font-size:24px;line-height:28px;color:#fff">Change Order 1 - Change to Hydraulic Lift</div>
<!-- fields -->
<div class="a fl" style="left:237px;top:323px"><u>N</u>umber</div>
<div class="a fl" style="left:237px;top:345px"><u>T</u>itle</div>
<div class="a fl" style="left:236px;top:368px"><u>D</u>escription</div>
<div class="a fl" style="left:456px;top:323px">Type</div>
<div class="a fl" style="left:894px;top:323px;font-size:11.500px">Cr<u>e</u>ated Date</div>
<div class="a fl" style="left:894px;top:345px;font-size:11.650px">Pu<u>b</u>lished Date</div>
<div class="a fb" style="left:307px;top:322px;width:145px;height:19px">1</div>
<div class="a fb" style="left:495px;top:322px;width:395px;height:19px">Customer Driven Change</div>
<div class="a" style="left:873px;top:323px;width:16px;height:17px;background:#e2e2e2;border:1px solid #b4b4b4"></div>
<svg class="a" style="left:876px;top:329px" width="10" height="8" viewBox="0 0 10 8"><path d="M1.500 2l3.500 3.500L8.500 2" fill="none" stroke="#444" stroke-width="1.100"/></svg>
<div class="a fb" style="left:307px;top:344px;width:583px;height:19px">Change to Hydraulic Lift</div>
<div class="a fb" style="left:307px;top:367px;width:790px;height:33px">Cargo Lifts #1, 2, and 3 need to be modified for Hyrdraulic Actuation, instead of the current Pneumatic Actuation.<span style="display:inline-block;width:1px;height:14px;background:#000;vertical-align:-2px"></span></div>
<div class="a" style="left:1080px;top:368px;width:16px;height:31px;background:#f0f0f0"></div>
<svg class="a" style="left:1083px;top:371px" width="10" height="26" viewBox="0 0 10 26" fill="none" stroke="#444" stroke-width="1.200"><path d="M1.500 7l3.500-3.500L8.500 7M1.500 17.500l3.500 3.500 3.500-3.500"/></svg>
<div class="a fb ro" style="left:981px;top:322px;width:115px;height:18px;text-align:right;font-size:11.700px;padding-right:2px;line-height:15px">6/22/11</div>
<div class="a fb ro" style="left:981px;top:344px;width:115px;height:18px"></div>
<!-- tab control -->
<div class="a" style="left:234px;top:425px;width:866px;height:347px;border:1px solid #e3e3e3;background:#fff"></div>
<div class="a" style="left:236px;top:405px;width:840px;height:21px;z-index:0">
<div class="a tab" style="left:0px;width:71px;height:21px"><span class="a" style="left:7.6px;top:2px;font-size:12.06px"><u>C</u>omments</span></div>
<div class="a tab sel" style="left:70px;width:143px;top:-2px;height:24px"><span class="a" style="left:10.4px;top:2px;font-size:11.91px"><u>L</u>abor Adjustments (CA)</span></div>
<div class="a tab" style="left:212px;width:151px;height:21px"><span class="a" style="left:5.4px;top:2px;font-size:11.92px"><u>M</u>aterial Adjustments (CA)</span></div>
<div class="a tab" style="left:362px;width:137px;height:21px"><span class="a" style="left:6.9px;top:2px;font-size:11.61px"><u>S</u>ales Adjustments (CA)</span></div>
<div class="a tab" style="left:498px;width:106px;height:21px"><span class="a" style="left:6.6px;top:2px;font-size:11.62px">Task <u>A</u>ssignments</span></div>
<div class="a tab" style="left:603px;width:48px;height:21px"><span class="a" style="left:9.5px;top:2px;font-size:11.64px">N<u>o</u>tes</span></div>
<div class="a tab" style="left:650px;width:75px;height:21px"><span class="a" style="left:8.5px;top:2px;font-size:11.92px">Doc<u>u</u>ments</span></div>
<div class="a tab" style="left:724px;width:109px;height:21px"><span class="a" style="left:7.3px;top:2px;font-size:11.77px">C<u>u</u>stom Properties</span></div>
</div>
<!--GRID--><div class="a" style="left:246px;top:434px;width:848px;height:310px;border:1px solid #dcdcdc;background:#c8c8c8"></div>
<div class="a" style="left:247px;top:435px;width:829px;height:21px;background:#c8c8c8;border-bottom:1px solid #a8a8a8"></div>
<div class="a" style="left:264px;top:435px;width:1px;height:40px;background:#fff"></div>
<div class="a gh" style="left:265px;top:435px;width:119px;padding-left:18px;font-size:11.0px;letter-spacing:-0.045px">Job</div>
<div class="a gh" style="left:384px;top:435px;width:56px;padding-left:3px;font-size:11.62px">Hours</div>
<div class="a" style="left:383px;top:435px;width:1px;height:21px;background:#fff"></div>
<div class="a gh" style="left:440px;top:435px;width:228px;padding-left:3px;font-size:11.89px">Description</div>
<div class="a" style="left:439px;top:435px;width:1px;height:21px;background:#fff"></div>
<div class="a gh" style="left:668px;top:435px;width:125px;padding-left:3px;font-size:11.75px">Hour Type</div>
<div class="a" style="left:667px;top:435px;width:1px;height:21px;background:#fff"></div>
<div class="a gh" style="left:793px;top:435px;width:131px;padding-left:3px;font-size:11.62px">Cost Per Hour</div>
<div class="a" style="left:792px;top:435px;width:1px;height:21px;background:#fff"></div>
<div class="a gh" style="left:924px;top:435px;width:152px;padding-left:3px;font-size:11.24px">Extended Cost</div>
<div class="a" style="left:923px;top:435px;width:1px;height:21px;background:#fff"></div>
<svg class="a" style="left:729px;top:441px" width="9" height="9" viewBox="0 0 9 9"><path d="M4.500 1L8 8H1z" fill="#d6d6d6" stroke="#f1f1f1" stroke-width=".9"/></svg>
<div class="a" style="left:265px;top:456px;width:811px;height:19px;background:#fff;border-bottom:1px solid #b0b0b0"></div>
<div class="a" style="left:383px;top:456px;width:1px;height:18px;background:#a3a3a3"></div>
<div class="a" style="left:439px;top:456px;width:1px;height:18px;background:#a3a3a3"></div>
<div class="a" style="left:667px;top:456px;width:1px;height:18px;background:#a3a3a3"></div>
<div class="a" style="left:792px;top:456px;width:1px;height:18px;background:#a3a3a3"></div>
<div class="a" style="left:923px;top:456px;width:1px;height:18px;background:#a3a3a3"></div>
<svg class="a" style="left:250px;top:461px" width="10" height="10" viewBox="0 0 11 11" stroke="#111" stroke-width="1.200"><path d="M5.500 .5v10M.5 5.500h10M2 2l7 7M9 2l-7 7"/></svg>
<div class="a" style="left:247px;top:475px;width:829px;height:5px;background:#c8c8c8;border-top:1px solid #fff"></div>
<div class="a" style="left:247px;top:478px;width:829px;height:2px;background:linear-gradient(#b4b4b4,#7e7e7e)"></div>
<div class="a" style="left:264px;top:480px;width:1px;height:247px;background:#9c9c9c"></div>
<div class="a" style="left:247px;top:480px;width:17px;height:19px;background:#c8c8c8;border-top:1px solid #fff;border-left:1px solid #e2e2e2"></div>
<div class="a" style="left:265px;top:480px;width:811px;height:19px;border-top:1px solid #a3a3a3"></div>
<div class="a" style="left:267px;top:483px;width:12px;height:12px;background:#e6e6e6;border:1px solid #fafafa;border-right-color:#a8a8a8;border-bottom-color:#a8a8a8"></div><div class="a" style="left:270px;top:488px;width:6px;height:1px;background:#222"></div>
<div class="a gt" style="left:282px;top:481px;font-size:11.69px">Mechanical Design</div>
<div class="a" style="left:247px;top:499px;width:17px;height:19px;background:#c8c8c8;border-top:1px solid #fff;border-left:1px solid #e2e2e2"></div>
<div class="a" style="left:280px;top:498px;width:796px;height:20px;background:#efefef;border:1px solid #a3a3a3;border-right:none"></div>
<div class="a gc" style="left:281px;top:499px;width:102px;text-align:right;font-size:11px;letter-spacing:-.115px">2</div>
<div class="a gc" style="left:384px;top:499px;width:55px;text-align:right;font-size:11px;letter-spacing:-.115px">25</div>
<div class="a" style="left:383px;top:499px;width:1px;height:18px;background:#a3a3a3"></div>
<div class="a gc" style="left:440px;top:499px;width:227px;text-align:left;font-size:11.77px">update Job 2's drawing package</div>
<div class="a" style="left:439px;top:499px;width:1px;height:18px;background:#a3a3a3"></div>
<div class="a gc" style="left:668px;top:499px;width:124px;text-align:right;font-size:11.69px">Mechanical Design</div>
<div class="a" style="left:667px;top:499px;width:1px;height:18px;background:#a3a3a3"></div>
<div class="a gc" style="left:793px;top:499px;width:130px;text-align:right;font-size:11px;letter-spacing:-.115px">$90.00</div>
<div class="a" style="left:792px;top:499px;width:1px;height:18px;background:#a3a3a3"></div>
<div class="a gc" style="left:924px;top:499px;width:151px;text-align:right;font-size:11px;letter-spacing:-.115px">$2,250.00</div>
<div class="a" style="left:923px;top:499px;width:1px;height:18px;background:#a3a3a3"></div>
<div class="a" style="left:247px;top:518px;width:17px;height:19px;background:#c8c8c8;border-top:1px solid #fff;border-left:1px solid #e2e2e2"></div>
<svg class="a" style="left:251px;top:522px" width="9" height="12" viewBox="0 0 9 12"><path d="M1 0.500v11l7-5.500z" fill="#000"/></svg>
<div class="a" style="left:280px;top:517px;width:796px;height:20px;background:#efefef;border:1px solid #a3a3a3;border-right:none"></div>
<div class="a gc" style="left:281px;top:518px;width:102px;text-align:right;font-size:11px;letter-spacing:-.115px">8</div>
<div class="a gc" style="left:384px;top:518px;width:55px;text-align:right;font-size:11px;letter-spacing:-.115px">25</div>
<div class="a" style="left:383px;top:518px;width:1px;height:18px;background:#a3a3a3"></div>
<div class="a gc" style="left:440px;top:518px;width:227px;text-align:left;font-size:11.99px">update of drawings</div>
<div class="a" style="left:439px;top:518px;width:1px;height:18px;background:#a3a3a3"></div>
<div class="a gc" style="left:668px;top:518px;width:124px;text-align:right;font-size:11.69px">Mechanical Design</div>
<div class="a" style="left:667px;top:518px;width:1px;height:18px;background:#a3a3a3"></div>
<div class="a gc" style="left:793px;top:518px;width:130px;text-align:right;font-size:11px;letter-spacing:-.115px">$90.00</div>
<div class="a" style="left:792px;top:518px;width:1px;height:18px;background:#a3a3a3"></div>
<div class="a gc" style="left:924px;top:518px;width:151px;text-align:right;font-size:11px;letter-spacing:-.115px">$2,250.00</div>
<div class="a" style="left:923px;top:518px;width:1px;height:18px;background:#a3a3a3"></div>
<div class="a" style="left:247px;top:537px;width:17px;height:19px;background:#c8c8c8;border-top:1px solid #fff;border-left:1px solid #e2e2e2"></div>
<div class="a" style="left:280px;top:536px;width:796px;height:20px;background:#efefef;border:1px solid #a3a3a3;border-right:none"></div>
<div class="a gc" style="left:281px;top:537px;width:102px;text-align:right;font-size:11px;letter-spacing:-.115px">1</div>
<div class="a gc" style="left:384px;top:537px;width:55px;text-align:right;font-size:11px;letter-spacing:-.115px">225</div>
<div class="a" style="left:383px;top:537px;width:1px;height:18px;background:#a3a3a3"></div>
<div class="a gc" style="left:440px;top:537px;width:227px;text-align:left;font-size:11.97px">re-design of mountings as needed</div>
<div class="a" style="left:439px;top:537px;width:1px;height:18px;background:#a3a3a3"></div>
<div class="a gc" style="left:668px;top:537px;width:124px;text-align:right;font-size:11.69px">Mechanical Design</div>
<div class="a" style="left:667px;top:537px;width:1px;height:18px;background:#a3a3a3"></div>
<div class="a gc" style="left:793px;top:537px;width:130px;text-align:right;font-size:11px;letter-spacing:-.115px">$90.00</div>
<div class="a" style="left:792px;top:537px;width:1px;height:18px;background:#a3a3a3"></div>
<div class="a gc" style="left:924px;top:537px;width:151px;text-align:right;font-size:11px;letter-spacing:-.115px">$20,250.00</div>
<div class="a" style="left:923px;top:537px;width:1px;height:18px;background:#a3a3a3"></div>
<div class="a" style="left:247px;top:556px;width:17px;height:19px;background:#c8c8c8;border-top:1px solid #fff;border-left:1px solid #e2e2e2"></div>
<div class="a gc" style="left:924px;top:556px;width:151px;text-align:right;font-size:11px;letter-spacing:-.115px">$24,750.00</div>
<div class="a" style="left:247px;top:575px;width:17px;height:19px;background:#c8c8c8;border-top:1px solid #fff;border-left:1px solid #e2e2e2"></div>
<div class="a" style="left:265px;top:575px;width:811px;height:19px;border-top:1px solid #a3a3a3"></div>
<div class="a" style="left:267px;top:578px;width:12px;height:12px;background:#e6e6e6;border:1px solid #fafafa;border-right-color:#a8a8a8;border-bottom-color:#a8a8a8"></div><div class="a" style="left:270px;top:583px;width:6px;height:1px;background:#222"></div>
<div class="a gt" style="left:282px;top:576px;font-size:11.41px">Electrical Design</div>
<div class="a" style="left:247px;top:594px;width:17px;height:19px;background:#c8c8c8;border-top:1px solid #fff;border-left:1px solid #e2e2e2"></div>
<div class="a" style="left:280px;top:593px;width:796px;height:20px;background:#fff;border:1px solid #a3a3a3;border-right:none"></div>
<div class="a gc" style="left:281px;top:594px;width:102px;text-align:right;font-size:11px;letter-spacing:-.115px">1</div>
<div class="a gc" style="left:384px;top:594px;width:55px;text-align:right;font-size:11px;letter-spacing:-.115px">160</div>
<div class="a" style="left:383px;top:594px;width:1px;height:18px;background:#a3a3a3"></div>
<div class="a gc" style="left:440px;top:594px;width:227px;text-align:left;font-size:11.73px">re-design on Electrical&nbsp; and Fluid Design</div>
<div class="a" style="left:439px;top:594px;width:1px;height:18px;background:#a3a3a3"></div>
<div class="a gc" style="left:668px;top:594px;width:124px;text-align:right;font-size:11.49px">Electrical Design</div>
<div class="a" style="left:667px;top:594px;width:1px;height:18px;background:#a3a3a3"></div>
<div class="a gc" style="left:793px;top:594px;width:130px;text-align:right;font-size:11px;letter-spacing:-.115px">$90.00</div>
<div class="a" style="left:792px;top:594px;width:1px;height:18px;background:#a3a3a3"></div>
<div class="a gc" style="left:924px;top:594px;width:151px;text-align:right;font-size:11px;letter-spacing:-.115px">$14,400.00</div>
<div class="a" style="left:923px;top:594px;width:1px;height:18px;background:#a3a3a3"></div>
<div class="a" style="left:247px;top:613px;width:17px;height:19px;background:#c8c8c8;border-top:1px solid #fff;border-left:1px solid #e2e2e2"></div>
<div class="a gc" style="left:924px;top:613px;width:151px;text-align:right;font-size:11px;letter-spacing:-.115px">$14,400.00</div>
<div class="a" style="left:247px;top:632px;width:17px;height:19px;background:#c8c8c8;border-top:1px solid #fff;border-left:1px solid #e2e2e2"></div>
<div class="a" style="left:265px;top:632px;width:811px;height:19px;border-top:1px solid #a3a3a3"></div>
<div class="a" style="left:267px;top:635px;width:12px;height:12px;background:#e6e6e6;border:1px solid #fafafa;border-right-color:#a8a8a8;border-bottom-color:#a8a8a8"></div><div class="a" style="left:270px;top:640px;width:6px;height:1px;background:#222"></div>
<div class="a gt" style="left:282px;top:633px;font-size:11.58px">Assembly</div>
<div class="a" style="left:247px;top:651px;width:17px;height:19px;background:#c8c8c8;border-top:1px solid #fff;border-left:1px solid #e2e2e2"></div>
<div class="a" style="left:280px;top:650px;width:796px;height:20px;background:#efefef;border:1px solid #a3a3a3;border-right:none"></div>
<div class="a gc" style="left:281px;top:651px;width:102px;text-align:right;font-size:11px;letter-spacing:-.115px">1</div>
<div class="a gc" style="left:384px;top:651px;width:55px;text-align:right;font-size:11px;letter-spacing:-.115px">125</div>
<div class="a" style="left:383px;top:651px;width:1px;height:18px;background:#a3a3a3"></div>
<div class="a gc" style="left:440px;top:651px;width:227px;text-align:left;font-size:12.11px">assembly, additional hours for piping</div>
<div class="a" style="left:439px;top:651px;width:1px;height:18px;background:#a3a3a3"></div>
<div class="a gc" style="left:668px;top:651px;width:124px;text-align:right;font-size:11.65px">Assembly</div>
<div class="a" style="left:667px;top:651px;width:1px;height:18px;background:#a3a3a3"></div>
<div class="a gc" style="left:793px;top:651px;width:130px;text-align:right;font-size:11px;letter-spacing:-.115px">$70.00</div>
<div class="a" style="left:792px;top:651px;width:1px;height:18px;background:#a3a3a3"></div>
<div class="a gc" style="left:924px;top:651px;width:151px;text-align:right;font-size:11px;letter-spacing:-.115px">$8,750.00</div>
<div class="a" style="left:923px;top:651px;width:1px;height:18px;background:#a3a3a3"></div>
<div class="a" style="left:247px;top:670px;width:17px;height:19px;background:#c8c8c8;border-top:1px solid #fff;border-left:1px solid #e2e2e2"></div>
<div class="a gc" style="left:924px;top:670px;width:151px;text-align:right;font-size:11px;letter-spacing:-.115px">$8,750.00</div>
<div class="a" style="left:247px;top:689px;width:17px;height:19px;background:#c8c8c8;border-top:1px solid #fff;border-left:1px solid #e2e2e2"></div>
<div class="a" style="left:265px;top:689px;width:811px;height:19px;border-top:1px solid #a3a3a3"></div>
<div class="a" style="left:267px;top:692px;width:12px;height:12px;background:#e6e6e6;border:1px solid #fafafa;border-right-color:#a8a8a8;border-bottom-color:#a8a8a8"></div><div class="a" style="left:270px;top:697px;width:6px;height:1px;background:#222"></div>
<div class="a gt" style="left:282px;top:690px;font-size:12.22px">Machining</div>
<div class="a" style="left:247px;top:708px;width:17px;height:19px;background:#c8c8c8;border-top:1px solid #fff;border-left:1px solid #e2e2e2"></div>
<div class="a" style="left:280px;top:707px;width:796px;height:20px;background:#fff;border:1px solid #a3a3a3;border-right:none"></div>
<div class="a gc" style="left:281px;top:708px;width:102px;text-align:right;font-size:11px;letter-spacing:-.115px">2</div>
<div class="a gc" style="left:384px;top:708px;width:55px;text-align:right;font-size:11px;letter-spacing:-.115px">120</div>
<div class="a" style="left:383px;top:708px;width:1px;height:18px;background:#a3a3a3"></div>
<div class="a gc" style="left:440px;top:708px;width:227px;text-align:left;font-size:12.22px">re-machining of exisisting mountings</div>
<div class="a" style="left:439px;top:708px;width:1px;height:18px;background:#a3a3a3"></div>
<div class="a gc" style="left:668px;top:708px;width:124px;text-align:right;font-size:12.22px">Machining</div>
<div class="a" style="left:667px;top:708px;width:1px;height:18px;background:#a3a3a3"></div>
<div class="a gc" style="left:793px;top:708px;width:130px;text-align:right;font-size:11px;letter-spacing:-.115px">$70.00</div>
<div class="a" style="left:792px;top:708px;width:1px;height:18px;background:#a3a3a3"></div>
<div class="a gc" style="left:924px;top:708px;width:151px;text-align:right;font-size:11px;letter-spacing:-.115px">$8,400.00</div>
<div class="a" style="left:923px;top:708px;width:1px;height:18px;background:#a3a3a3"></div>
<div class="a" style="left:1076px;top:435px;width:17px;height:292px;background:#f0f0f0"></div>
<div class="a" style="left:1077px;top:452px;width:16px;height:239px;background:#c9c9c9"></div>
<svg class="a" style="left:1080px;top:440px" width="10" height="8" viewBox="0 0 10 8"><path d="M1.500 6l3.500-3.500L8.500 6" fill="none" stroke="#444" stroke-width="1.300"/></svg>
<svg class="a" style="left:1080px;top:714px" width="10" height="8" viewBox="0 0 10 8"><path d="M1.500 2l3.500 3.500L8.500 2" fill="none" stroke="#444" stroke-width="1.300"/></svg>
<div class="a" style="left:247px;top:726px;width:847px;height:18px;background:#f0f0f0;border-top:1px solid #dcdcdc;border-bottom:1px solid #b5b5b5"></div>
<div class="a" style="left:251.500px;top:728px;font-size:11.05px;line-height:15px">Record:</div>
<svg class="a" style="left:294px;top:727px" width="176" height="17" viewBox="0 0 176 17">
<g fill="#efefef" stroke="none"><rect x="0" y="0" width="18" height="16"/><rect x="19" y="0" width="16" height="16"/><rect x="117" y="0" width="17" height="16"/><rect x="135" y="0" width="18" height="16"/><rect x="154" y="0" width="19" height="16"/></g>
<g stroke="#6e6e6e" fill="none"><path d="M0 16.500h18.500v-16M19 16.500h16.500v-16M117 16.500h17.500v-16M135 16.500h18.500v-16M154 16.500h19.500v-16"/></g>
<g stroke="#fff" fill="none"><path d="M.5 16V.5H18M19.500 16V.5H35M117.500 16V.5H134M135.500 16V.5H153M154.500 16V.5H173"/></g>
<rect x="42.500" y="1.500" width="41" height="15" fill="#fff" stroke="#7a7a7a"/><path d="M43 16.500h41v-15" stroke="#e3e3e3" fill="none"/>
<g fill="#000"><rect x="5" y="4" width="2" height="9"/><path d="M15.400 3.500v10l-5.400-5z"/><path d="M30 3.500v10l-5-5z"/><path d="M123 3.500v10l5-5z"/><path d="M139 3.500v10l5-5z"/><rect x="145" y="4" width="2" height="9"/><path d="M156 3.500v10l5-5z"/></g>
<g stroke="#000" stroke-width="1"><path d="M166.500 4v9M162 8.500h9M163.300 5.300l6.400 6.400M169.700 5.300l-6.400 6.400"/></g>
</svg>
<div class="a" style="left:337px;top:728px;width:39px;text-align:right;font-size:11px;line-height:15px">2</div>
<div class="a" style="left:385px;top:728px;font-size:12px;line-height:15px">of 6</div>
<!--/GRID-->
<div class="a" style="left:844px;top:747px;font-size:12px;-webkit-text-stroke:.3px #000;letter-spacing:.08px">Total Labor Adjustments</div>
<div class="a fb" style="left:977px;top:746px;width:117px;height:19px;text-align:right;border-color:#c4c4c4;font-size:11px;letter-spacing:-.115px">$56,300.00</div>
<div class="a btn" style="left:886px;top:775px;width:138px;height:23px;color:#1a1a8c;font-size:11.47px">C<u>h</u>ange Order Details</div>
<div class="a btn" style="left:1030px;top:775px;width:71px;height:23px"><u>P</u>ublish</div>


</body>
</html>
